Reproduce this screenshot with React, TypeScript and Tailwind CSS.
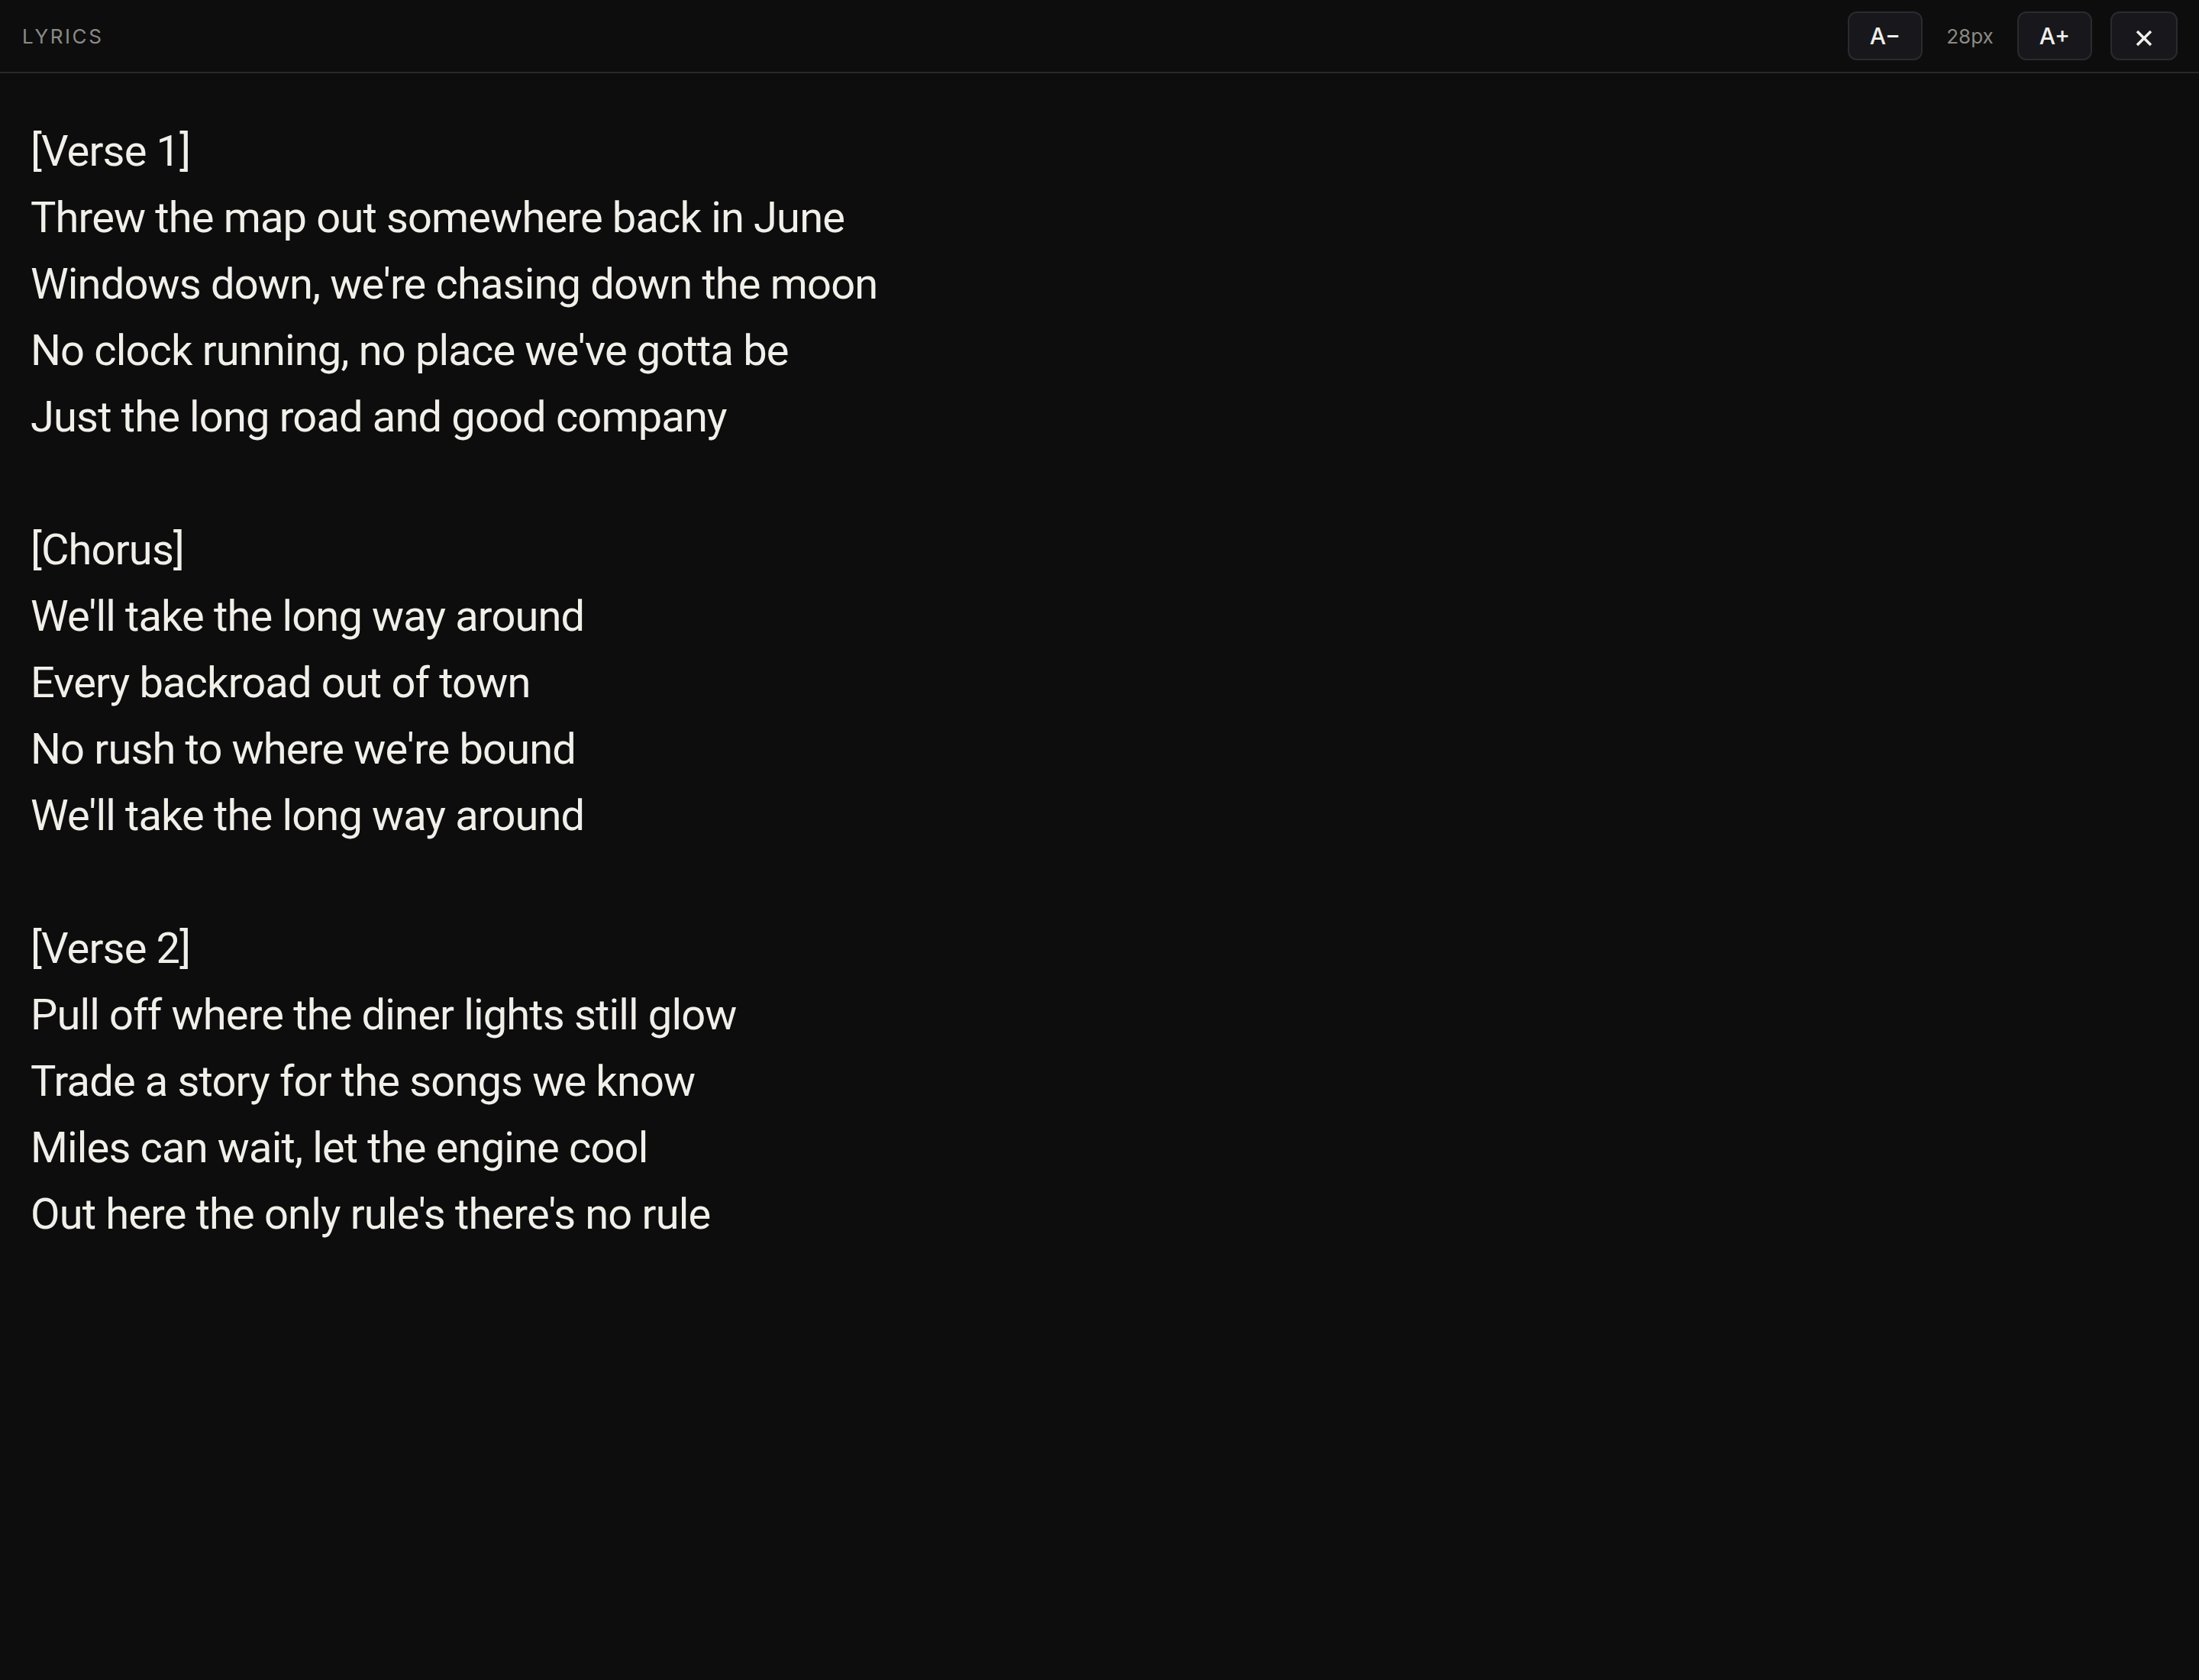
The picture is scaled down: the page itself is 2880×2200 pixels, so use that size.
import React, { useState } from 'react';

interface Section {
  label: string;
  lines: string[];
}

const sections: Section[] = [
  {
    label: '[Verse 1]',
    lines: [
      'Threw the map out somewhere back in June',
      "Windows down, we're chasing down the moon",
      "No clock running, no place we've gotta be",
      'Just the long road and good company',
    ],
  },
  {
    label: '[Chorus]',
    lines: [
      "We'll take the long way around",
      'Every backroad out of town',
      "No rush to where we're bound",
      "We'll take the long way around",
    ],
  },
  {
    label: '[Verse 2]',
    lines: [
      'Pull off where the diner lights still glow',
      'Trade a story for the songs we know',
      'Miles can wait, let the engine cool',
      "Out here the only rule's there's no rule",
    ],
  },
];

const CloseIcon = () => (
  <svg width="22" height="22" viewBox="0 0 22 22" className="translate-y-[3px]">
    <path d="M2 2 L20 20 M20 2 L2 20" stroke="#f0efe9" strokeWidth="3.5" strokeLinecap="butt" />
  </svg>
);

const App: React.FC = () => {
  const [size] = useState(28);

  return (
    <div className="min-h-screen w-full bg-[#0d0d0d] font-['Inter','Noto_Sans',sans-serif] text-[#f0efe9]">
      {/* Header */}
      <div className="flex h-[96px] items-center justify-between border-b-2 border-[#28282d] pl-[29px] pr-[28px]">
        <span className="text-[26px] tracking-[0.1em] text-[#8b8b86]">LYRICS</span>
        <div className="flex items-center gap-[24px]">
          <button className="flex h-[64px] w-[98px] items-center justify-center rounded-[12px] border-2 border-[#2a2a2f] bg-[#18181c] text-[30px] font-medium">
            A−
          </button>
          <span className="w-[76px] text-center text-[26px] text-[#8b8b86]">{size}px</span>
          <button className="flex h-[64px] w-[98px] items-center justify-center rounded-[12px] border-2 border-[#2a2a2f] bg-[#18181c] text-[30px] font-medium">
            A+
          </button>
          <button className="flex h-[64px] w-[88px] items-center justify-center rounded-[12px] border-2 border-[#2a2a2f] bg-[#18181c]">
            <CloseIcon />
          </button>
        </div>
      </div>

      {/* Lyrics */}
      <div className="flex flex-col gap-[87px] px-[40px] pt-[59px] font-['Roboto',sans-serif] text-[56px] leading-[87px] tracking-[-0.015em]">
        {sections.map((section) => (
          <div key={section.label} className="flex flex-col">
            <p>{section.label}</p>
            {section.lines.map((line, i) => (
              <p key={i}>{line}</p>
            ))}
          </div>
        ))}
      </div>
    </div>
  );
};

export default App;
